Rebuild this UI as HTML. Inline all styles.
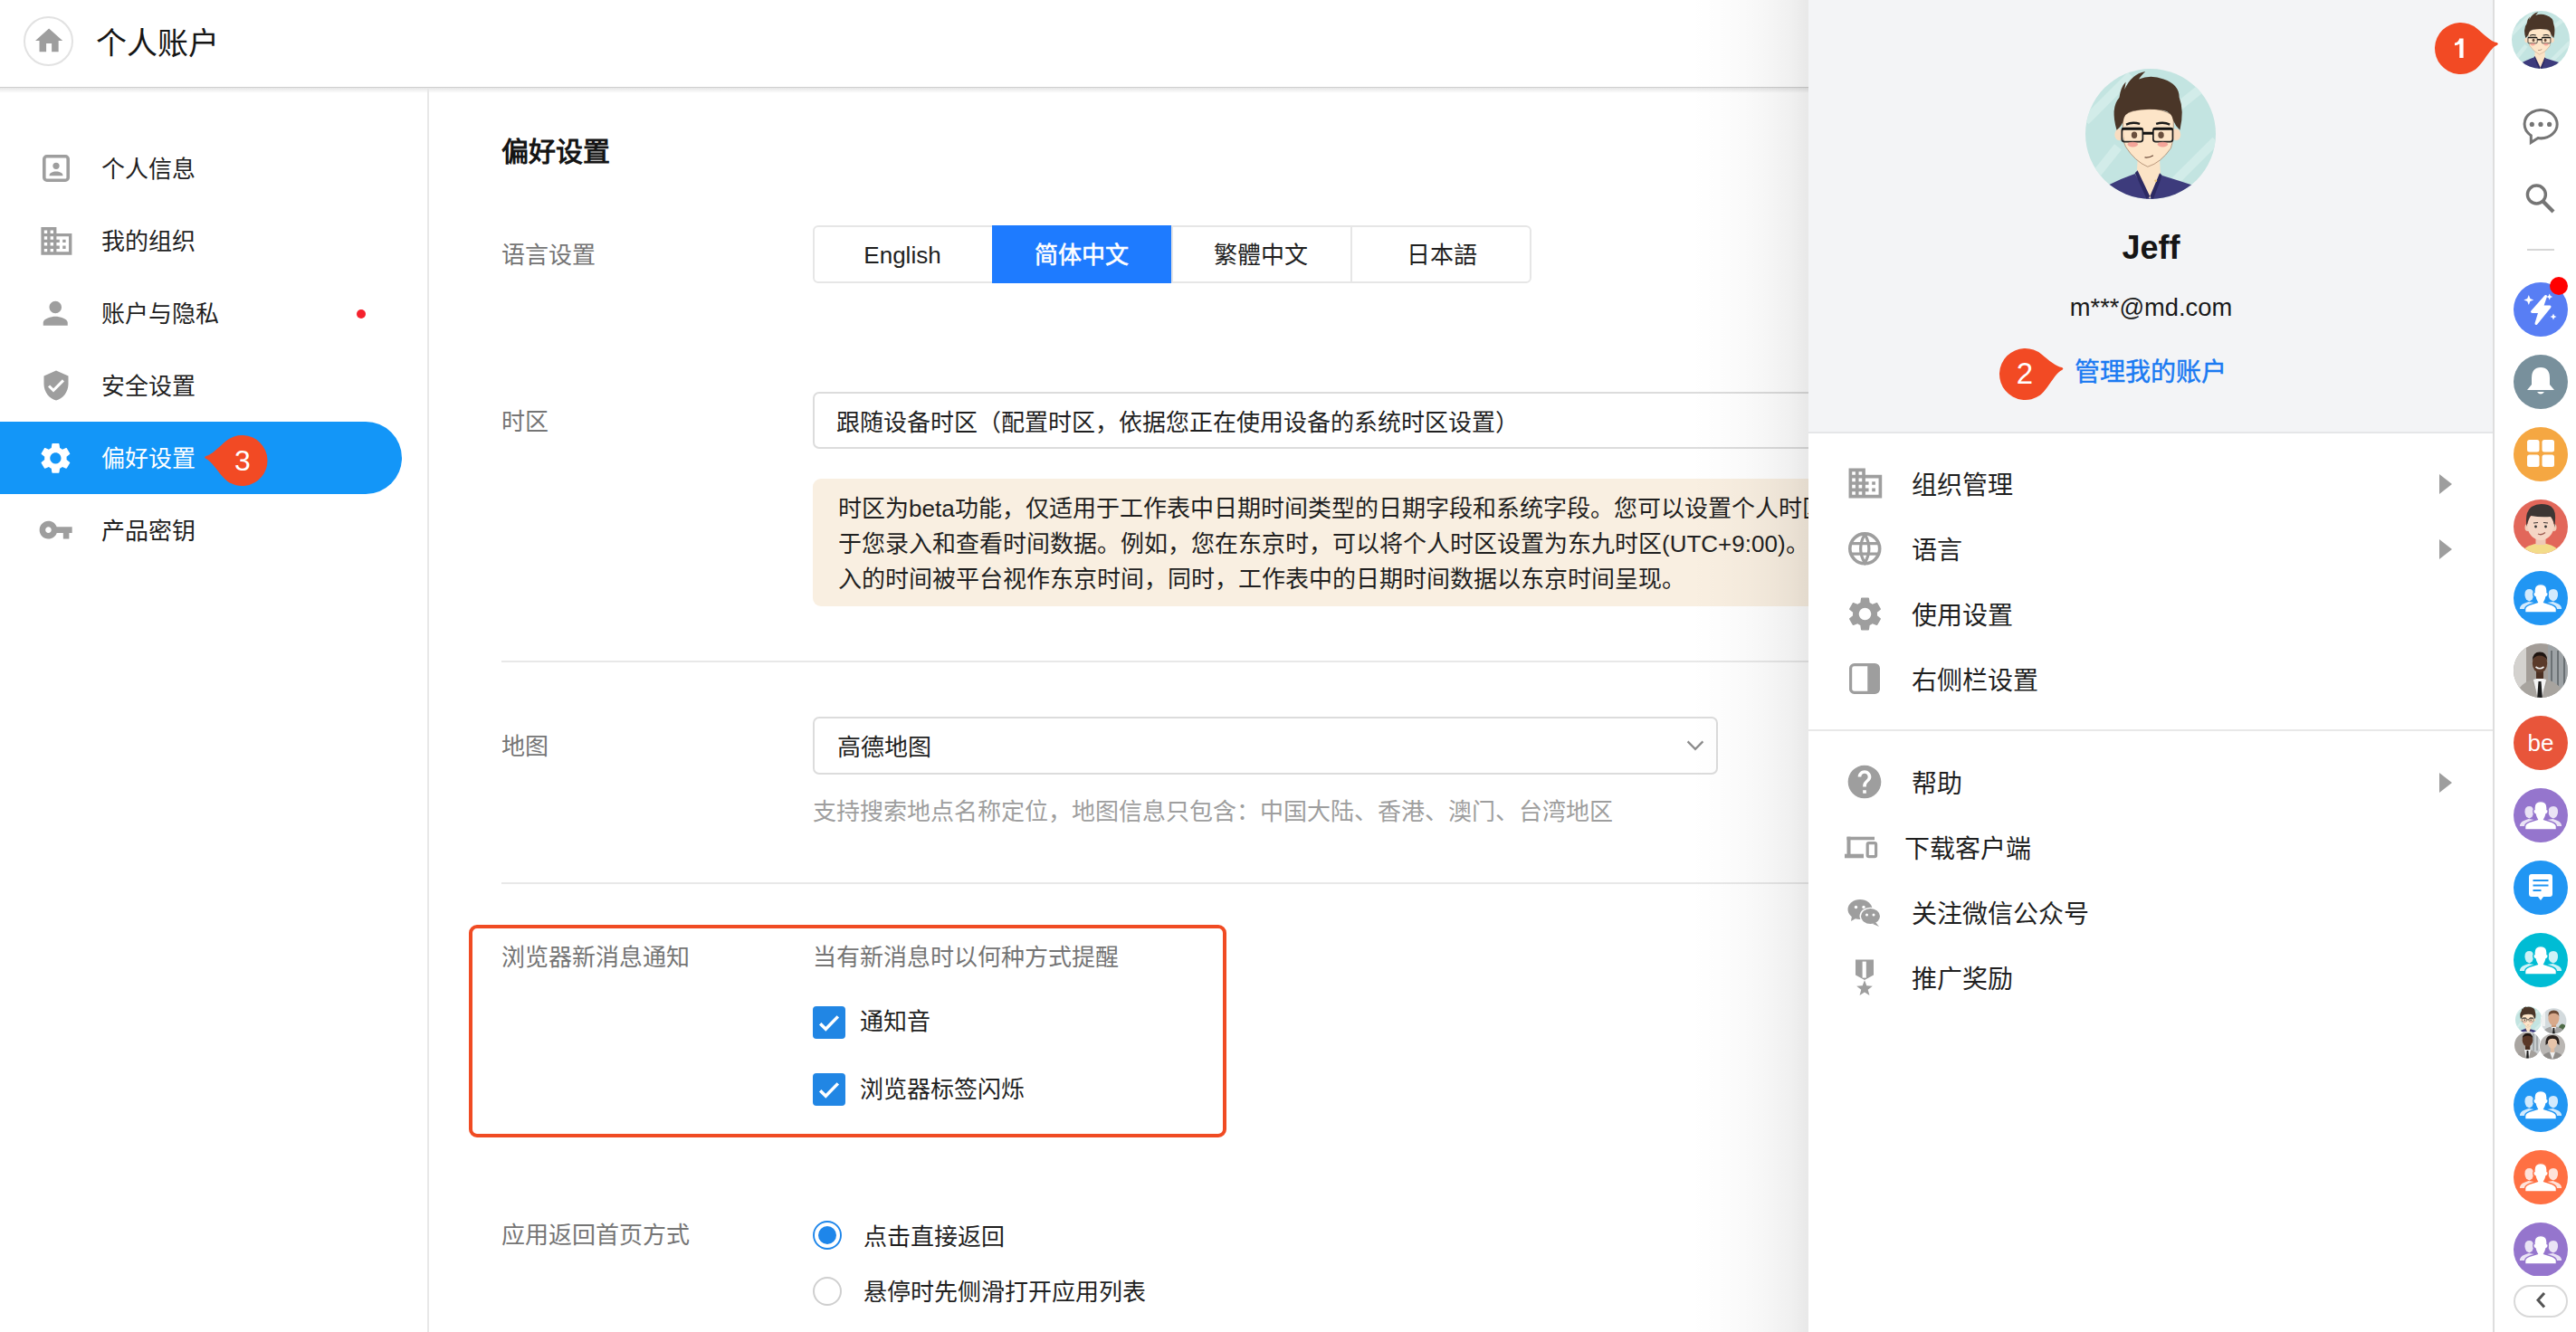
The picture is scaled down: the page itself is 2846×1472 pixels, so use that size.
<!DOCTYPE html>
<html lang="zh-CN"><head><meta charset="utf-8">
<style>
html,body{margin:0;padding:0;}
body{width:2846px;height:1472px;overflow:hidden;position:relative;background:#fff;font-family:"Liberation Sans",sans-serif;color:#1f1f1f;}
.a{position:absolute;}
.t{position:absolute;white-space:nowrap;line-height:40px;height:40px;margin-top:1px;}
.p{margin-top:2px;}
.g{color:#757575;}
svg{display:block;}
</style></head><body>
<svg width="0" height="0" style="position:absolute">
<defs>
<symbol id="jeff" viewBox="0 0 100 100">
<clipPath id="cc"><circle cx="50" cy="50" r="50"/></clipPath>
<g clip-path="url(#cc)">
<rect width="100" height="100" fill="#c4e4e1"/>
<path d="M0 40 L35 5 M60 95 L100 55 M5 85 L25 60 M70 30 L95 10" stroke="#d6eeeb" stroke-width="7" opacity=".8"/>
<path d="M40 70 L57 70 L58 88 L49 100 L39 88z" fill="#fbe3c6"/>
<path d="M10 100 L18 89 Q28 84 38 80.5 L49.5 100 L59 82 Q72 86 84 90 L92 100z" fill="#3d3b7c"/>
<path d="M38 80 L40 78 L49.5 98 L47 100z M59 82 L57 80 L49.5 98 L52 100z" fill="#2c2a63"/>
<circle cx="54" cy="86" r="1" fill="#e8c070"/>
<path d="M29 36 Q28 56 31 60 Q38 71 47.8 75.2 Q58 72 65.5 61 Q68 55 67.5 36 Q58 30 48 31 Q36 31 29 36z" fill="#fde5c8" stroke="#a07a60" stroke-width=".5"/>
<ellipse cx="26" cy="50.5" rx="3.6" ry="4.5" fill="#f9dcc0"/><ellipse cx="69.5" cy="50.5" rx="3.6" ry="4.5" fill="#f9dcc0"/>
<path d="M24 47 Q19 30 26 22 Q27 14 31 10 L30 16 Q35 4 46 2 Q42 6 41 8 Q50 4 60 8 Q72 12 72 22 Q76 32 72.5 47 Q69 44 67.5 40 Q66 33 60 32 Q48 30 36 32.5 Q30 34 29 40 Q28 44 24 47z" fill="#4a3628"/>
<path d="M31 42 Q36 39.5 42 41.5 L41.5 43 Q36 41.5 31.5 43.5z M54 41.5 Q60 39.5 65 42 L64.5 43.5 Q60 41.5 54.5 43z" fill="#1a1a1a"/>
<rect x="28" y="45.5" width="16" height="10.5" rx="2" fill="none" stroke="#222" stroke-width="1.2"/>
<rect x="52" y="45.5" width="15" height="10.5" rx="2" fill="none" stroke="#222" stroke-width="1.2"/>
<path d="M28 46.2 L44 46.2 M52 46.2 L67 46.2" stroke="#111" stroke-width="1.8"/>
<path d="M44 49.5 L52 49.5" stroke="#111" stroke-width="2.2"/>
<ellipse cx="37.5" cy="50.8" rx="2.2" ry="2.6" fill="#6a4f3e"/><ellipse cx="58" cy="50.8" rx="2.2" ry="2.6" fill="#6a4f3e"/>
<ellipse cx="36.3" cy="58" rx="4" ry="2" fill="#f29a92" opacity=".85"/><ellipse cx="59.3" cy="58" rx="4" ry="2" fill="#f29a92" opacity=".85"/>
<path d="M45.5 68 Q49 68.5 52 66.5" stroke="#6b4a38" stroke-width=".8" fill="none"/>
</g>
</symbol>
<symbol id="grp" viewBox="0 0 60 60">
 <g fill="#fff" fill-opacity=".8">
  <path d="M12.5 27 Q12 20 17.5 20 Q22.5 20 22 27 Q21.5 32 17.5 33.5 Q13 32 12.5 27z"/>
  <path d="M6.8 42 Q7 37.5 12 35.8 L16.5 34 L23 35 L23 42z"/>
  <path d="M38.5 27 Q38 20 44 20 Q49.5 20 49 27 Q48.5 32 44 33.5 Q39 32 38.5 27z"/>
  <path d="M53.2 42 Q53 37.5 48 35.8 L43.5 34 L37 35 L37 42z"/>
 </g>
 <path fill="#fff" stroke="currentColor" stroke-width="1.4" d="M12.6 46 L12.6 42 Q13 38.5 20 36.5 L26.3 34.6 Q24.5 31.5 24 28.8 Q21.8 28.3 21.8 25.8 Q21.8 23.5 23 23.6 Q22.2 14.6 30 14.6 Q37.8 14.6 37 23.6 Q38.2 23.5 38.2 25.8 Q38.2 28.3 36 28.8 Q35.5 31.5 33.7 34.6 L40 36.5 Q47 38.5 47.4 42 L47.4 46z"/>
</symbol>
</defs></svg>


<!-- HEADER -->
<div class="a" style="left:0;top:0;width:2846px;height:96px;background:#fff;"></div>
<div class="a" style="left:0;top:96px;width:2000px;height:1px;background:#cfcfcf;"></div>
<div class="a" style="left:0;top:97px;width:2000px;height:6px;background:linear-gradient(#e6e6e6,rgba(255,255,255,0));"></div>
<div class="a" style="left:26px;top:18px;width:51px;height:51px;border:2px solid #e2e2e2;border-radius:50%;"></div>
<svg class="a" style="left:36.1px;top:26.5px" width="36.2" height="36.2" viewBox="0 0 24 24"><path fill="#9e9e9e" d="M10 20v-6h4v6h5v-8h3L12 3 2 12h3v8z"/></svg>
<div class="t" style="left:106px;top:27px;font-size:34px;color:#151515;">个人账户</div>

<!-- LEFT SIDEBAR -->
<div class="a" style="left:472px;top:97px;width:2px;height:1375px;background:#e8e8e8;"></div>


<!-- nav icons -->
<svg class="a" style="left:47px;top:171px" width="30" height="30" viewBox="0 0 30 30"><rect x="1.8" y="1.8" width="26.4" height="26.4" rx="3" fill="none" stroke="#9e9e9e" stroke-width="3.6"/><circle cx="15" cy="12.3" r="3.6" fill="#9e9e9e"/><path d="M7.5 23.2c0-3 3.6-4.6 7.5-4.6s7.5 1.6 7.5 4.6z" fill="#9e9e9e"/></svg>
<svg class="a" style="left:41.6px;top:245.9px" width="40.8" height="40.8" viewBox="0 0 24 24"><path fill="#9e9e9e" d="M12 7V3H2v18h20V7H10zM6 19H4v-2h2v2zm0-4H4v-2h2v2zm0-4H4V9h2v2zm0-4H4V5h2v2zm4 12H8v-2h2v2zm0-4H8v-2h2v2zm0-4H8V9h2v2zm0-4H8V5h2v2zm10 12h-8v-2h2v-2h-2v-2h2v-2h-2V9h8v10zm-2-8h-2v2h2v-2zm0 4h-2v2h2v-2z"/></svg>
<svg class="a" style="left:41.25px;top:326.25px" width="40.5" height="40.5" viewBox="0 0 24 24"><path fill="#9e9e9e" d="M12 12c2.21 0 4-1.79 4-4s-1.79-4-4-4-4 1.79-4 4 1.79 4 4 4zm0 2c-2.67 0-8 1.34-8 4v2h16v-2c0-2.66-5.33-4-8-4z"/></svg>
<svg class="a" style="left:43.5px;top:407.5px" width="36" height="36" viewBox="0 0 24 24"><path fill="#9e9e9e" d="M12 1L3 5v6c0 5.55 3.84 10.74 9 12 5.16-1.26 9-6.45 9-12V5l-9-4zm-2 16l-4-4 1.41-1.41L10 14.17l6.59-6.59L18 9l-8 8z"/></svg>
<div class="a" style="left:0;top:466px;width:444px;height:80px;background:#1396f8;border-radius:0 40px 40px 0;"></div>
<svg class="a" style="left:41.4px;top:485.6px" width="40.8" height="40.8" viewBox="0 0 24 24"><path fill="#fff" d="M19.14 12.94c.04-.3.06-.61.06-.94 0-.32-.02-.64-.07-.94l2.03-1.58c.18-.14.23-.41.12-.61l-1.92-3.32c-.12-.22-.37-.29-.59-.22l-2.39.96c-.5-.38-1.03-.7-1.62-.94l-.36-2.54c-.04-.24-.24-.41-.48-.41h-3.84c-.24 0-.43.17-.47.41l-.36 2.54c-.59.24-1.13.57-1.62.94l-2.39-.96c-.22-.08-.47 0-.59.22L2.74 8.87c-.12.21-.08.47.12.61l2.03 1.58c-.05.3-.09.63-.09.94s.02.64.07.94l-2.03 1.58c-.18.14-.23.41-.12.61l1.92 3.32c.12.22.37.29.59.22l2.39-.96c.5.38 1.03.7 1.62.94l.36 2.54c.05.24.24.41.48.41h3.84c.24 0 .44-.17.47-.41l.36-2.54c.59-.24 1.13-.56 1.62-.94l2.39.96c.22.08.47 0 .59-.22l1.92-3.32c.12-.22.07-.47-.12-.61l-2.01-1.58zM12 15.6c-1.98 0-3.6-1.62-3.6-3.6s1.62-3.6 3.6-3.6 3.6 1.62 3.6 3.6-1.62 3.6-3.6 3.6z"/></svg>
<svg class="a" style="left:42.4px;top:566.2px" width="39.3" height="39.3" viewBox="0 0 24 24"><path fill="#9e9e9e" d="M12.65 10C11.83 7.67 9.61 6 7 6c-3.31 0-6 2.69-6 6s2.69 6 6 6c2.61 0 4.83-1.67 5.65-4H17v4h4v-4h2v-4H12.65zM7 14c-1.1 0-2-.9-2-2s.9-2 2-2 2 .9 2 2-.9 2-2 2z"/></svg>
<!-- nav text -->
<div class="t" style="left:112px;top:166px;font-size:26px;">个人信息</div>
<div class="t" style="left:112px;top:246px;font-size:26px;">我的组织</div>
<div class="t" style="left:112px;top:326px;font-size:26px;">账户与隐私</div>
<div class="a" style="left:394px;top:342px;width:10px;height:10px;border-radius:50%;background:#f5222d;"></div>
<div class="t" style="left:112px;top:406px;font-size:26px;">安全设置</div>
<div class="t" style="left:112px;top:486px;font-size:26px;color:#fff;">偏好设置</div>
<div class="t" style="left:112px;top:566px;font-size:26px;">产品密钥</div>
<!-- badge 3 -->
<svg class="a" style="left:221.50px;top:477.00px" width="77.50" height="64.00" viewBox="0 0 77.50 64.00"><path fill="#f24a24" d="M27.50 10.55 C20.61 16.34 11.50 26.30 5.50 26.90 Q2.80 28.50 5.50 30.10 C12.50 32.50 21.25 49.20 29.44 54.94 A28.00 28.00 0 1 0 27.50 10.55 Z"/></svg>
<div class="t" style="left:254px;top:488px;width:28px;text-align:center;font-size:32px;color:#fff;">3</div>


<!-- CONTENT -->

<div class="t" style="left:554px;top:147px;font-size:30px;font-weight:bold;color:#151515;">偏好设置</div>
<div class="t g" style="left:554px;top:261px;font-size:26px;">语言设置</div>
<!-- segmented -->
<div class="a" style="left:898px;top:249px;width:790px;height:60px;border:2px solid #e6e6e6;border-radius:6px;"></div>
<div class="a" style="left:1096px;top:249px;width:2px;height:64px;background:#e6e6e6;"></div>
<div class="a" style="left:1294px;top:249px;width:2px;height:64px;background:#e6e6e6;"></div>
<div class="a" style="left:1492px;top:249px;width:2px;height:64px;background:#e6e6e6;"></div>
<div class="a" style="left:1096px;top:249px;width:198px;height:64px;background:#1e7bff;"></div>
<div class="t" style="left:898px;top:261px;width:198px;text-align:center;font-size:26px;">English</div>
<div class="t" style="left:1096px;top:261px;width:198px;text-align:center;font-size:26px;color:#fff;-webkit-text-stroke:0.6px #fff;">简体中文</div>
<div class="t" style="left:1294px;top:261px;width:198px;text-align:center;font-size:26px;">繁體中文</div>
<div class="t" style="left:1494px;top:261px;width:198px;text-align:center;font-size:26px;">日本語</div>

<div class="t g" style="left:554px;top:445px;font-size:26px;">时区</div>
<div class="a" style="left:898px;top:433px;width:1200px;height:59px;border:2px solid #dcdcdc;border-radius:7px;"></div>
<div class="t" style="left:924px;top:446px;font-size:26px;">跟随设备时区（配置时区，依据您正在使用设备的系统时区设置）</div>
<div class="a" style="left:898px;top:529px;width:1200px;height:141px;background:#f9efe1;border-radius:9px;"></div>
<div class="a" style="left:926px;top:543px;font-size:26px;line-height:39px;white-space:nowrap;color:#1f1f1f;">时区为beta功能，仅适用于工作表中日期时间类型的日期字段和系统字段。您可以设置个人时区，用<br>于您录入和查看时间数据。例如，您在东京时，可以将个人时区设置为东九时区(UTC+9:00)。您录<br>入的时间被平台视作东京时间，同时，工作表中的日期时间数据以东京时间呈现。</div>

<div class="a" style="left:554px;top:730px;width:1500px;height:2px;background:#e8e8e8;"></div>

<div class="t g" style="left:554px;top:804px;font-size:26px;">地图</div>
<div class="a" style="left:898px;top:792px;width:996px;height:60px;border:2px solid #dcdcdc;border-radius:7px;"></div>
<div class="t" style="left:925px;top:805px;font-size:26px;">高德地图</div>
<svg class="a" style="left:1862px;top:816px" width="22" height="16" viewBox="0 0 22 16"><path d="M2.6 3.4L11 11.8L19.4 3.4" fill="none" stroke="#8c8c8c" stroke-width="2.3"/></svg>
<div class="t" style="left:898px;top:876px;font-size:26px;color:#9e9e9e;">支持搜索地点名称定位，地图信息只包含：中国大陆、香港、澳门、台湾地区</div>

<div class="a" style="left:554px;top:975px;width:1500px;height:2px;background:#e8e8e8;"></div>

<div class="a" style="left:518px;top:1022px;width:829px;height:227px;border:4px solid #f04b23;border-radius:9px;"></div>
<div class="t g" style="left:554px;top:1037px;font-size:26px;">浏览器新消息通知</div>
<div class="t g" style="left:898px;top:1037px;font-size:26px;">当有新消息时以何种方式提醒</div>
<svg class="a" style="left:898px;top:1112px" width="36" height="36" viewBox="0 0 36 36"><rect width="36" height="36" rx="4" fill="#2186e4"/><path d="M8.2 19.3L14.3 25.3L27.8 11.4" fill="none" stroke="#fff" stroke-width="3.5"/></svg>
<div class="t" style="left:950px;top:1108px;font-size:26px;">通知音</div>
<svg class="a" style="left:898px;top:1186px" width="36" height="36" viewBox="0 0 36 36"><rect width="36" height="36" rx="4" fill="#2186e4"/><path d="M8.2 19.3L14.3 25.3L27.8 11.4" fill="none" stroke="#fff" stroke-width="3.5"/></svg>
<div class="t" style="left:950px;top:1183px;font-size:26px;">浏览器标签闪烁</div>

<div class="t g" style="left:554px;top:1344px;font-size:26px;">应用返回首页方式</div>
<svg class="a" style="left:898px;top:1349px" width="32" height="32" viewBox="0 0 32 32"><circle cx="16" cy="16" r="15" fill="#fff" stroke="#1e86ea" stroke-width="1.9"/><circle cx="16" cy="16" r="10" fill="#1e86ea"/></svg>
<div class="t" style="left:954px;top:1346px;font-size:26px;">点击直接返回</div>
<svg class="a" style="left:898px;top:1411px" width="32" height="32" viewBox="0 0 32 32"><circle cx="16" cy="16" r="15" fill="#fff" stroke="#cfcfcf" stroke-width="2"/></svg>
<div class="t" style="left:954px;top:1407px;font-size:26px;">悬停时先侧滑打开应用列表</div>


<!-- RIGHT PANEL -->

<div class="a" style="left:1868px;top:0;width:130px;height:1472px;background:linear-gradient(to right,rgba(0,0,0,0) 0%,rgba(0,0,0,0.012) 30%,rgba(0,0,0,0.025) 50%,rgba(0,0,0,0.04) 68%,rgba(0,0,0,0.06) 85%,rgba(0,0,0,0.09) 100%);"></div>
<div class="a" style="left:1998px;top:0;width:757px;height:1472px;background:#fff;"></div>
<div class="a" style="left:1998px;top:0;width:757px;height:477px;background:#f3f4f6;border-bottom:2px solid #e5e6e8;"></div>
<svg class="a" style="left:2304px;top:76px" width="144" height="144"><use href="#jeff"/></svg>
<div class="t p" style="left:1998px;top:252px;width:757px;text-align:center;font-size:36px;font-weight:bold;color:#151515;">Jeff</div>
<div class="t p" style="left:1998px;top:318px;width:757px;text-align:center;font-size:27.3px;color:#1a1a1a;">m***@md.com</div>
<div class="t p" style="left:2292px;top:390px;font-size:28px;-webkit-text-stroke:0.45px #1a7af2;color:#1a7af2;">管理我的账户</div>
<svg class="a" style="left:2204.50px;top:380.50px" width="78.50" height="65.00" viewBox="0 0 78.50 65.00"><path fill="#f24a24" d="M50.82 10.67 C57.71 16.45 67.00 24.30 73.00 24.90 Q75.70 26.50 73.00 28.10 C66.00 30.50 57.04 50.11 48.85 55.85 A28.50 28.50 0 1 1 50.82 10.67 Z"/></svg>
<div class="t p" style="left:2223px;top:391px;width:28px;text-align:center;font-size:33px;color:#fff;">2</div>

<!-- menu -->
<svg class="a" style="left:2041.5px;top:512px" width="44" height="44" viewBox="0 0 24 24"><path fill="#9e9e9e" d="M12 7V3H2v18h20V7H10zM6 19H4v-2h2v2zm0-4H4v-2h2v2zm0-4H4V9h2v2zm0-4H4V5h2v2zm4 12H8v-2h2v2zm0-4H8v-2h2v2zm0-4H8V9h2v2zm0-4H8V5h2v2zm10 12h-8v-2h2v-2h-2v-2h2v-2h-2V9h8v10zm-2-8h-2v2h2v-2zm0 4h-2v2h2v-2z" transform="translate(-1.7 0)"/></svg>
<svg class="a" style="left:2042px;top:588px" width="36.5" height="36.6" viewBox="0 0 36.5 36.6"><g fill="none" stroke="#9e9e9e"><circle cx="18.25" cy="18.3" r="16.45" stroke-width="3.6"/><path d="M18.25 2.5Q9 18.3 18.25 34.1Q27.5 18.3 18.25 2.5Z" stroke-width="3.2"/><path d="M2 12.6H34.5M2 24.1H34.5" stroke-width="3.2"/></g></svg>
<svg class="a" style="left:2037.7px;top:655.85px" width="45" height="45" viewBox="0 0 24 24"><path fill="#9e9e9e" d="M19.14 12.94c.04-.3.06-.61.06-.94 0-.32-.02-.64-.07-.94l2.03-1.58c.18-.14.23-.41.12-.61l-1.920-3.32c-.12-.22-.37-.29-.59-.22l-2.39.96c-.5-.38-1.03-.7-1.62-.94l-.36-2.54c-.04-.24-.24-.41-.48-.41h-3.84c-.24 0-.43.17-.47.41l-.36 2.54c-.59.24-1.13.57-1.62.94l-2.39-.96c-.22-.08-.47 0-.59.22L2.74 8.870c-.12.21-.08.47.12.61l2.03 1.58c-.05.3-.09.63-.09.94s.02.64.07.94l-2.03 1.58c-.18.14-.23.41-.12.61l1.92 3.32c.12.22.37.29.59.22l2.39-.96c.5.38 1.03.7 1.62.94l.36 2.54c.05.24.24.41.48.41h3.84c.24 0 .44-.17.47-.41l.36-2.54c.59-.24 1.13-.56 1.62-.94l2.39.96c.22.08.47 0 .59-.22l1.92-3.32c.12-.22.07-.47-.12-.61l-2.01-1.58zM12 15.6c-1.98 0-3.6-1.62-3.6-3.6s1.62-3.6 3.6-3.6 3.6 1.62 3.6 3.6-1.62 3.6-3.6 3.6z"/></svg>
<svg class="a" style="left:2043px;top:733px" width="34" height="34" viewBox="0 0 34 34"><rect x="1.6" y="1.6" width="30.8" height="30.8" rx="4" fill="none" stroke="#9e9e9e" stroke-width="3.2"/><rect x="20.5" y="1" width="12.5" height="32" rx="3" fill="#9e9e9e"/><rect x="20.5" y="1" width="5" height="32" fill="#9e9e9e"/></svg>

<div class="t p" style="left:2112px;top:515px;font-size:28px;">组织管理</div>
<div class="t p" style="left:2112px;top:587px;font-size:28px;">语言</div>
<div class="t p" style="left:2112px;top:659px;font-size:28px;">使用设置</div>
<div class="t p" style="left:2112px;top:731px;font-size:28px;">右侧栏设置</div>
<svg class="a" style="left:2694px;top:523px" width="16" height="24" viewBox="0 0 16 24"><path d="M1 1l14 11L1 23z" fill="#9e9e9e"/></svg>
<svg class="a" style="left:2694px;top:595px" width="16" height="24" viewBox="0 0 16 24"><path d="M1 1l14 11L1 23z" fill="#9e9e9e"/></svg>
<div class="a" style="left:1998px;top:806px;width:757px;height:2px;background:#e8e8e8;"></div>

<svg class="a" style="left:2037.9px;top:842.1px" width="44" height="44" viewBox="0 0 24 24"><path fill="#9e9e9e" d="M12 2C6.48 2 2 6.48 2 12s4.48 10 10 10 10-4.48 10-10S17.52 2 12 2zm1 17h-2v-2h2v2zm2.07-7.75l-.9.92C13.45 12.9 13 13.5 13 15h-2v-.5c0-1.1.45-2.1 1.17-2.83l1.24-1.260c.37-.36.59-.86.59-1.41 0-1.1-.9-2-2-2s-2 .9-2 2H8c0-2.21 1.79-4 4-4s4 1.79 4 4c0 .88-.36 1.68-.93 2.25z"/></svg>
<svg class="a" style="left:2036px;top:922px" width="42" height="30" viewBox="0 0 42 30"><g fill="#9e9e9e"><rect x="4.5" y="2.7" width="30.5" height="3.6"/><rect x="4.5" y="2.7" width="4" height="21"/><rect x="2" y="21.7" width="21" height="4.6"/></g><rect x="27.2" y="9.6" width="9.4" height="15.1" rx="1.6" fill="none" stroke="#9e9e9e" stroke-width="3.2"/></svg>
<svg class="a" style="left:2041px;top:994px" width="38" height="31" viewBox="0 0 38 31"><ellipse cx="14" cy="11" rx="13.5" ry="11" fill="#9e9e9e"/><path d="M5 18l-1 6 7-4z" fill="#9e9e9e"/><ellipse cx="25.5" cy="18.5" rx="12" ry="9.8" fill="#fff"/><ellipse cx="25.5" cy="18.5" rx="10.5" ry="8.6" fill="#9e9e9e"/><path d="M31 25l4 5-7-3z" fill="#9e9e9e"/><circle cx="9.5" cy="8.5" r="1.7" fill="#fff"/><circle cx="18" cy="8.5" r="1.7" fill="#fff"/><circle cx="21.5" cy="17" r="1.5" fill="#fff"/><circle cx="29" cy="17" r="1.5" fill="#fff"/></svg>
<svg class="a" style="left:2048px;top:1059px" width="24" height="43" viewBox="0 0 24 43"><path d="M2 1.5H22V18.5L12 24L2 18.5Z" fill="#9e9e9e"/><rect x="9.6" y="3.6" width="4.2" height="18" fill="#fff"/><path d="M12.00 24.20 L14.29 30.34 L20.84 30.63 L15.71 34.71 L17.47 41.02 L12.00 37.40 L6.53 41.02 L8.29 34.71 L3.16 30.63 L9.71 30.34Z" fill="#9e9e9e"/></svg>

<div class="t p" style="left:2112px;top:845px;font-size:28px;">帮助</div>
<div class="t p" style="left:2104px;top:917px;font-size:28px;">下载客户端</div>
<div class="t p" style="left:2112px;top:989px;font-size:28px;">关注微信公众号</div>
<div class="t p" style="left:2112px;top:1061px;font-size:28px;">推广奖励</div>
<svg class="a" style="left:2694px;top:853px" width="16" height="24" viewBox="0 0 16 24"><path d="M1 1l14 11L1 23z" fill="#9e9e9e"/></svg>


<!-- RIGHT SIDEBAR -->

<div class="a" style="left:2754px;top:0;width:92px;height:1472px;background:#fff;"></div>
<div class="a" style="left:2754px;top:0;width:2px;height:1472px;background:#dedede;"></div>
<svg class="a" style="left:2775px;top:12px" width="64" height="64"><use href="#jeff"/></svg>
<svg class="a" style="left:2686.00px;top:20.50px" width="78.00" height="65.00" viewBox="0 0 78.00 65.00"><path fill="#f24a24" d="M50.82 10.67 C57.71 16.45 66.50 25.30 72.50 25.90 Q75.20 27.50 72.50 29.10 C65.50 31.50 57.04 50.11 48.85 55.85 A28.50 28.50 0 1 1 50.82 10.67 Z"/></svg>
<svg class="a" style="left:2710px;top:41px" width="14" height="25" viewBox="0 0 14 25"><path d="M7.2 1.5h4.4V23H7.3V7.6Q5.2 9 2 9.3V6.5Q6 5.8 7.2 1.5z" fill="#fff"/></svg>
<svg class="a" style="left:2785px;top:118px" width="44" height="44" viewBox="0 0 44 44"><path d="M19 34.6 A18 15.65 0 1 0 11.3 31.7 L11.3 39.6 Z" fill="none" stroke="#757575" stroke-width="3" stroke-linejoin="miter"/><circle cx="12.3" cy="19.4" r="2.6" fill="#757575"/><circle cx="22" cy="19.4" r="2.6" fill="#757575"/><circle cx="31.6" cy="19.4" r="2.6" fill="#757575"/></svg>
<svg class="a" style="left:2788px;top:200px" width="40" height="40" viewBox="0 0 40 40"><circle cx="14.4" cy="15" r="10" fill="none" stroke="#757575" stroke-width="3.4"/><path d="M21.5 22.5L33 34" stroke="#757575" stroke-width="4.2"/></svg>
<div class="a" style="left:2792px;top:275px;width:30px;height:2px;background:#d6d6d6;"></div>

<div class="a" style="left:2756px;top:300px;width:90px;height:1110px;overflow:hidden;">
 <div class="a" style="left:21px;top:12px;width:60px;height:60px;border-radius:50%;background:#587ef4;"></div>
 <svg class="a" style="left:21px;top:12px" width="60" height="60" viewBox="0 0 60 60"><path d="M35.5 15.5 L20.5 32.5 L29 32.5 L25 45.5 L40 27 L31.5 27z" fill="#fff" stroke="#fff" stroke-width="3" stroke-linejoin="round"/><path d="M16.8 14 l1.6 3.9 3.9 1.6-3.9 1.6-1.6 3.9-1.6-3.9-3.9-1.6 3.9-1.6z M39.7 12.5 l1.1 2.4 2.4 1.1-2.4 1.1-1.1 2.4-1.1-2.4-2.4-1.1 2.4-1.1z M44 34.5 l1.1 2.4 2.4 1.1-2.4 1.1-1.1 2.4-1.1-2.4-2.4-1.1 2.4-1.1z" fill="#fff"/></svg>
 <div class="a" style="left:61px;top:6px;width:20px;height:20px;border-radius:50%;background:#ff0000;"></div>

 <div class="a" style="left:21px;top:92px;width:60px;height:60px;border-radius:50%;background:#78909c;"></div>
 <svg class="a" style="left:21px;top:92px" width="60" height="60" viewBox="0 0 60 60"><path d="M30 14 Q40 14 40 26 L40 33 L45 39 L15 39 L20 33 L20 26 Q20 14 30 14z" fill="#fff"/><path d="M26 41 Q30 46 34 41z" fill="#fff"/></svg>

 <div class="a" style="left:21px;top:172px;width:60px;height:60px;border-radius:50%;background:#f5a742;"></div>
 <svg class="a" style="left:21px;top:172px" width="60" height="60" viewBox="0 0 60 60"><g fill="#fff"><rect x="15" y="14" width="13.5" height="13.5" rx="2.5"/><rect x="31.5" y="14" width="13.5" height="13.5" rx="2.5"/><rect x="15" y="30.5" width="13.5" height="13.5" rx="2.5"/><rect x="31.5" y="30.5" width="13.5" height="13.5" rx="2.5"/></g></svg>

 <svg class="a" style="left:21px;top:252px" width="60" height="60" viewBox="0 0 60 60"><clipPath id="c4"><circle cx="30" cy="30" r="30"/></clipPath><g clip-path="url(#c4)"><rect width="60" height="60" fill="#e2675a"/><path d="M8 62 Q10 50 30 48 Q50 50 52 62z" fill="#f3dc8a"/><rect x="24.5" y="40" width="11" height="10" fill="#efc9b6"/><ellipse cx="15.5" cy="31" rx="3" ry="4" fill="#f1cdb9"/><ellipse cx="44.5" cy="31" rx="3" ry="4" fill="#f1cdb9"/><ellipse cx="30" cy="29" rx="14.5" ry="16" fill="#f5d6c5"/><path d="M14.5 30 Q12 14 20 8 Q28 3 38 6 Q47 9 46 22 L45.5 31 Q44 22 41 19 Q30 20 19 18 Q16 22 14.5 30z" fill="#3d3634"/><circle cx="24.5" cy="30" r="1.4" fill="#333"/><circle cx="35.5" cy="30" r="1.4" fill="#333"/><path d="M22 26 L27 25.5 M33 25.5 L38 26" stroke="#3d3634" stroke-width="1.2"/><path d="M27 38 Q31 40 35 36.5" stroke="#9a5a50" fill="none" stroke-width="1.3"/></g></svg>

 <div class="a" style="left:21px;top:331px;width:60px;height:60px;border-radius:50%;background:#2196f3;"></div>
 <svg class="a" style="left:21px;top:331px" width="60" height="60" color="#2196f3"><use href="#grp"/></svg>

 <svg class="a" style="left:21px;top:411px" width="60" height="60" viewBox="0 0 60 60"><clipPath id="c6"><circle cx="30" cy="30" r="30"/></clipPath><g clip-path="url(#c6)"><rect width="60" height="60" fill="#a39d98"/><rect x="0" y="0" width="14" height="60" fill="#d4d2cf"/><rect x="38" y="0" width="22" height="60" fill="#9ea3a6"/><path d="M42 8V50M49 8V50M56 8V50" stroke="#5e6468" stroke-width="1.6"/><path d="M2 62 Q4 42 29 38 Q54 42 58 62z" fill="#a8a49f"/><path d="M22 40 L29 38 L36 40 L31 62 L27 62z" fill="#f4f4f4"/><path d="M27.5 42 L30.5 42 L32 62 L26 62z" fill="#1b1b1b"/><path d="M20 40 L27 58 L22 44z M38 40 L31 58 L36 44z" fill="#8f8b86"/><rect x="25" y="30" width="8" height="9" fill="#4a2f22"/><ellipse cx="29" cy="22" rx="8.2" ry="10.5" fill="#5a3a2a"/><path d="M20.8 19 Q21 9.5 29 9.5 Q37 9.5 37.2 19 Q35 13.5 29 13.5 Q23 13.5 20.8 19z" fill="#1d1410"/><path d="M24.5 26 Q29 29.5 33.5 26" stroke="#f2f2f2" stroke-width="1.6" fill="none"/></g></svg>

 <div class="a" style="left:21px;top:491px;width:60px;height:60px;border-radius:50%;background:#e8553a;"></div>
 <div class="t" style="left:21px;top:500px;width:60px;text-align:center;font-size:26px;color:#fff;">be</div>

 <div class="a" style="left:21px;top:571px;width:60px;height:60px;border-radius:50%;background:#9575cd;"></div>
 <svg class="a" style="left:21px;top:571px" width="60" height="60" color="#9575cd"><use href="#grp"/></svg>

 <div class="a" style="left:21px;top:651px;width:60px;height:60px;border-radius:50%;background:#2196f3;"></div>
 <svg class="a" style="left:21px;top:651px" width="60" height="60" viewBox="0 0 60 60"><path d="M17 18 Q17 15 20 15 L40 15 Q43 15 43 18 L43 37 Q43 40 40 40 L33 40 L30 44 L27 40 L20 40 Q17 40 17 37z" fill="#fff"/><path d="M21.5 22h17M21.5 27.5h17M21.5 33h9" stroke="#2196f3" stroke-width="1.8"/></svg>

 <div class="a" style="left:21px;top:731px;width:60px;height:60px;border-radius:50%;background:#00bcd4;"></div>
 <svg class="a" style="left:21px;top:731px" width="60" height="60" color="#00bcd4"><use href="#grp"/></svg>

 <svg class="a" style="left:21px;top:811px" width="60" height="60" viewBox="0 0 60 60">
  <clipPath id="m1"><circle cx="16.7" cy="16" r="14.7"/></clipPath>
  <clipPath id="m2"><circle cx="44.4" cy="17.3" r="14"/></clipPath>
  <clipPath id="m3"><circle cx="15.5" cy="44" r="14.5"/></clipPath>
  <clipPath id="m4"><circle cx="43" cy="45.5" r="14"/></clipPath>
  <g clip-path="url(#m1)"><svg x="0" y="-0.5" width="33" height="33"><use href="#jeff"/></svg></g>
  <circle cx="15.5" cy="44" r="15.2" fill="#fff"/>
  <g clip-path="url(#m3)"><rect x="0" y="29" width="31" height="31" fill="#a9a5a1"/><rect x="19" y="29" width="12" height="31" fill="#c8cdd0"/><path d="M22 31V50M26 31V50" stroke="#7d8387" stroke-width="1"/><path d="M1 62 Q3 50 15.5 48.5 Q28 50 30 62z" fill="#a4a09c"/><path d="M12 49 L15.5 48 L19 49 L16.5 60 L14.5 60z" fill="#f2f2f2"/><path d="M14.6 50 L16.4 50 L17 60 L14 60z" fill="#1b1b1b"/><rect x="13" y="43" width="5" height="6" fill="#4a2f22"/><ellipse cx="15.5" cy="38.5" rx="5.8" ry="7.2" fill="#5a3828"/><path d="M9.7 36.5 Q10 31 15.5 31 Q21 31 21.3 36.5 Q19.5 33.5 15.5 33.5 Q11.5 33.5 9.7 36.5z" fill="#1d1410"/></g>
  <circle cx="43" cy="45.5" r="14.7" fill="#fff"/>
  <g clip-path="url(#m4)"><rect x="28" y="31" width="30" height="30" fill="#b9b6b3"/><path d="M29 62 Q31 52 43 51 Q55 52 57 62z" fill="#8f8c89"/><path d="M40 51.5 L43 60 L46 51.5z" fill="#efefef"/><rect x="41" y="46" width="4" height="6" fill="#e0bda3"/><path d="M35.5 44 Q34.5 33 43 33 Q51.5 33 50.5 44 L48 42 Q48 37 43 36.5 Q38 37 38 42z" fill="#2a201c"/><ellipse cx="43" cy="41.5" rx="5" ry="6.3" fill="#e6c4aa"/><path d="M37.5 39 Q38.5 34.5 43 34.5 Q47.5 34.5 48.5 39 Q46 36.8 43 36.8 Q40 36.8 37.5 39z" fill="#2a201c"/></g>
  <circle cx="44.4" cy="17.3" r="14.7" fill="#fff"/>
  <g clip-path="url(#m2)"><rect x="30" y="3" width="29" height="29" fill="#d3dadd"/><rect x="31" y="5" width="4" height="18" fill="#f0f2f2"/><path d="M50 24 Q53 18 57 22 L58 32 L50 32z" fill="#4f6b48"/><path d="M31 33 Q33 24 44.4 23 Q56 24 58 33z" fill="#a3a3a3"/><path d="M41.5 23.5 L44.4 32 L47.3 23.5z" fill="#f1f1f1"/><path d="M43.5 25 L45.3 25 L45.8 32 L43 32z" fill="#1b1b1b"/><rect x="42" y="19" width="5" height="5" fill="#c99a7c"/><ellipse cx="44.4" cy="14.5" rx="6" ry="7.8" fill="#d8a98b"/><path d="M38.4 12.5 Q38 5.5 44.4 5.5 Q50.8 5.5 50.4 12.5 Q49 8.8 44.4 8.8 Q39.8 8.8 38.4 12.5z" fill="#6b4a35"/></g>
 </svg>

 <div class="a" style="left:21px;top:891px;width:60px;height:60px;border-radius:50%;background:#2196f3;"></div>
 <svg class="a" style="left:21px;top:891px" width="60" height="60" color="#2196f3"><use href="#grp"/></svg>

 <div class="a" style="left:21px;top:971px;width:60px;height:60px;border-radius:50%;background:#ff7043;"></div>
 <svg class="a" style="left:21px;top:971px" width="60" height="60" color="#ff7043"><use href="#grp"/></svg>

 <div class="a" style="left:21px;top:1051px;width:60px;height:60px;border-radius:50%;background:#9575cd;"></div>
 <svg class="a" style="left:21px;top:1051px" width="60" height="60" color="#9575cd"><use href="#grp"/></svg>
</div>
<div class="a" style="left:2777px;top:1420px;width:56px;height:32px;border:2px solid #d9d9d9;border-radius:18px;"></div>
<svg class="a" style="left:2798px;top:1426px" width="20" height="22" viewBox="0 0 20 22"><path d="M13 3L6 10.8l7 7.8" fill="none" stroke="#555" stroke-width="3"/></svg>


</body></html>
